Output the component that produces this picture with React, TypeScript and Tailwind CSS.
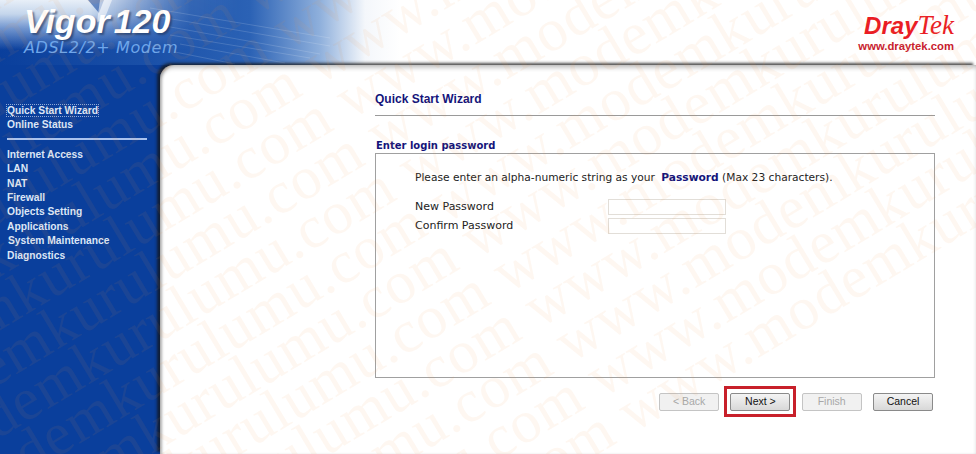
import React from 'react';

const MENU_TOP = ['Quick Start Wizard', 'Online Status'];
const MENU_MAIN = [
  'Internet Access',
  'LAN',
  'NAT',
  'Firewall',
  'Objects Setting',
  'Applications',
  'System Maintenance',
  'Diagnostics',
];
const ROWS = Array.from({ length: 20 }, (_, i) => i);

function Watermark() {
  return (
    <div aria-hidden className="pointer-events-none absolute inset-0 overflow-hidden">
      <div className="absolute left-[-500px] top-[-480px] w-[2000px] rotate-[-31deg] font-['Liberation_Serif',serif] text-[60px] leading-[46px] tracking-[1px] text-[#f09040]/[0.075]">
        {ROWS.map((row) => (
          <div key={row} className="whitespace-nowrap" style={{ paddingLeft: row * 9 }}>
            www.modemkurulumu.com www.modemkurulumu.com www.modemkurulumu.com
          </div>
        ))}
      </div>
    </div>
  );
}

function Header() {
  return (
    <header className="relative flex h-[65px] shrink-0 justify-between overflow-hidden bg-[linear-gradient(90deg,#0a3f9c_0px,#1a50a8_150px,#2b62b5_250px,#8fb0dc_320px,#f4f7fb_365px,#ffffff_400px)]">
      <div className="absolute inset-0 bg-[linear-gradient(180deg,#e8eff8_0px,#c5d6ec_14px,rgba(150,180,225,0.75)_28px,rgba(10,63,156,0)_50px)] [mask-image:linear-gradient(90deg,#000_90px,rgba(0,0,0,0.1)_190px,transparent_240px)]" />
      <svg className="absolute inset-0" width="976" height="65" viewBox="0 0 976 65" fill="none">
        <g stroke="#ffffff" strokeOpacity="0.15">
          <path d="M150 8 L330 38" />
          <path d="M160 17 L330 46" />
          <path d="M165 26 L320 54" />
          <path d="M170 35 L310 58" />
          <path d="M180 44 L285 63" />
          <path d="M175 52 L235 64" />
        </g>
        <path d="M88 0 L104 0 L99 13 Z" fill="#0a3f9c" fillOpacity="0.55" />
        <path d="M100 0 L112 0 L104 20 L97 22 Z" fill="#ffffff" fillOpacity="0.55" />
      </svg>
      <div className="relative ml-[24px] pt-[2px] font-['Liberation_Sans',sans-serif] italic">
        <div className="whitespace-nowrap text-[34px] font-bold leading-[38px] text-white [text-shadow:2px_2px_2px_rgba(30,50,90,0.6)]">
          Vigor<span className="ml-[4px]">120</span>
        </div>
        <div className="mt-[-1px] whitespace-nowrap font-['DejaVu_Sans',sans-serif] text-[16px] leading-[18px] tracking-[0.6px] text-[#6fa6ea]">
          ADSL2/2+ Modem
        </div>
      </div>
      <div className="relative mr-[22px] mt-[13px] text-right text-[#ea1c24]">
        <div className="whitespace-nowrap leading-[24px]">
          <span className="font-['Liberation_Sans',sans-serif] text-[24px] font-bold italic">Dray</span>
          <span className="font-['Liberation_Serif',serif] text-[27px] italic">Tek</span>
        </div>
        <div className="font-['Liberation_Sans',sans-serif] text-[11.3px] font-bold leading-[12px] text-[#c8202e]">
          www.draytek.com
        </div>
      </div>
    </header>
  );
}

function Sidebar() {
  return (
    <nav className="w-[160px] shrink-0 pl-[7px] pr-[13px] pt-[39px] font-['Liberation_Sans',sans-serif] text-[10.25px] font-bold leading-[14.4px] text-[#dce6f6]">
      <ul>
        {MENU_TOP.map((item, idx) => (
          <li key={item}>
            <span className={idx === 0 ? 'outline-1 outline-dotted outline-[#c9d8f0]/70' : ''}>{item}</span>
          </li>
        ))}
      </ul>
      <div className="mb-[8px] mt-[5px] h-[2px] bg-[#a9c2ee]" />
      <ul>
        {MENU_MAIN.map((item) => (
          <li key={item} className={item === 'System Maintenance' ? 'pl-[1px]' : ''}>
            {item}
          </li>
        ))}
      </ul>
    </nav>
  );
}

function WizardButton({ label, disabled }: { label: string; disabled?: boolean }) {
  return (
    <button
      className={
        disabled
          ? "block h-[18px] w-[60px] rounded-[2px] border border-[#c4c4c4] bg-[#f1f1f1] font-['Liberation_Sans',sans-serif] text-[10.5px] text-[#a8a8a8]"
          : "block h-[18px] w-[60px] rounded-[2px] border border-[#8a8a8a] bg-[linear-gradient(180deg,#f4f4f4,#d8d8d8)] font-['Liberation_Sans',sans-serif] text-[10.5px] text-[#111111]"
      }
    >
      {label}
    </button>
  );
}

function Wizard() {
  return (
    <main className="relative min-w-0 flex-1 rounded-tl-[14px] bg-white pl-[215px] pr-[41px] pt-[27px] shadow-[-3px_-2px_3px_rgba(20,20,20,0.75),inset_0_4px_4px_-1px_rgba(0,0,0,0.22),inset_3px_0_3px_-1px_rgba(0,0,0,0.28)]">
      <h1 className="border-b border-[#9a9a9a] pb-[8px] font-['Liberation_Sans',sans-serif] text-[12px] font-bold leading-[15px] text-[#14147a]">
        Quick Start Wizard
      </h1>
      <h2 className="pl-[1px] pt-[23px] font-['DejaVu_Sans',sans-serif] text-[10px] font-bold leading-[14px] text-[#14147a]">
        Enter login password
      </h2>
      <section className="h-[225px] border border-[#a0a0a0] pl-[39px] pt-[16px] font-['DejaVu_Sans',sans-serif] text-[11px] text-[#222222]">
        <p className="text-[10.65px] leading-[16px]">
          Please enter an alpha-numeric string as your{' '}
          <b className="ml-[3px] text-[#14147a]">Password</b> (Max 23 characters).
        </p>
        <div className="mt-[13px] grid grid-cols-[193px_118px] gap-y-[3px] leading-[16px]">
          <label>New Password</label>
          <input className="h-[16px] border border-[#e2ded8] bg-white" />
          <label>Confirm Password</label>
          <input className="h-[16px] border border-[#e2ded8] bg-white" />
        </div>
      </section>
      <div className="mr-[2px] mt-[15px] flex justify-end gap-[11.3px]">
        <WizardButton label="< Back" disabled />
        <div className="relative">
          <WizardButton label="Next >" />
          <div className="absolute left-[-6px] top-[-7px] h-[31px] w-[72px] border-[3px] border-[#c8202a]" />
        </div>
        <WizardButton label="Finish" disabled />
        <WizardButton label="Cancel" />
      </div>
    </main>
  );
}

export default function App() {
  return (
    <div className="relative flex h-[454px] w-[976px] flex-col overflow-hidden bg-[#0a3f9c]">
      <Header />
      <div className="flex min-h-0 flex-1">
        <Sidebar />
        <Wizard />
      </div>
      <Watermark />
    </div>
  );
}
